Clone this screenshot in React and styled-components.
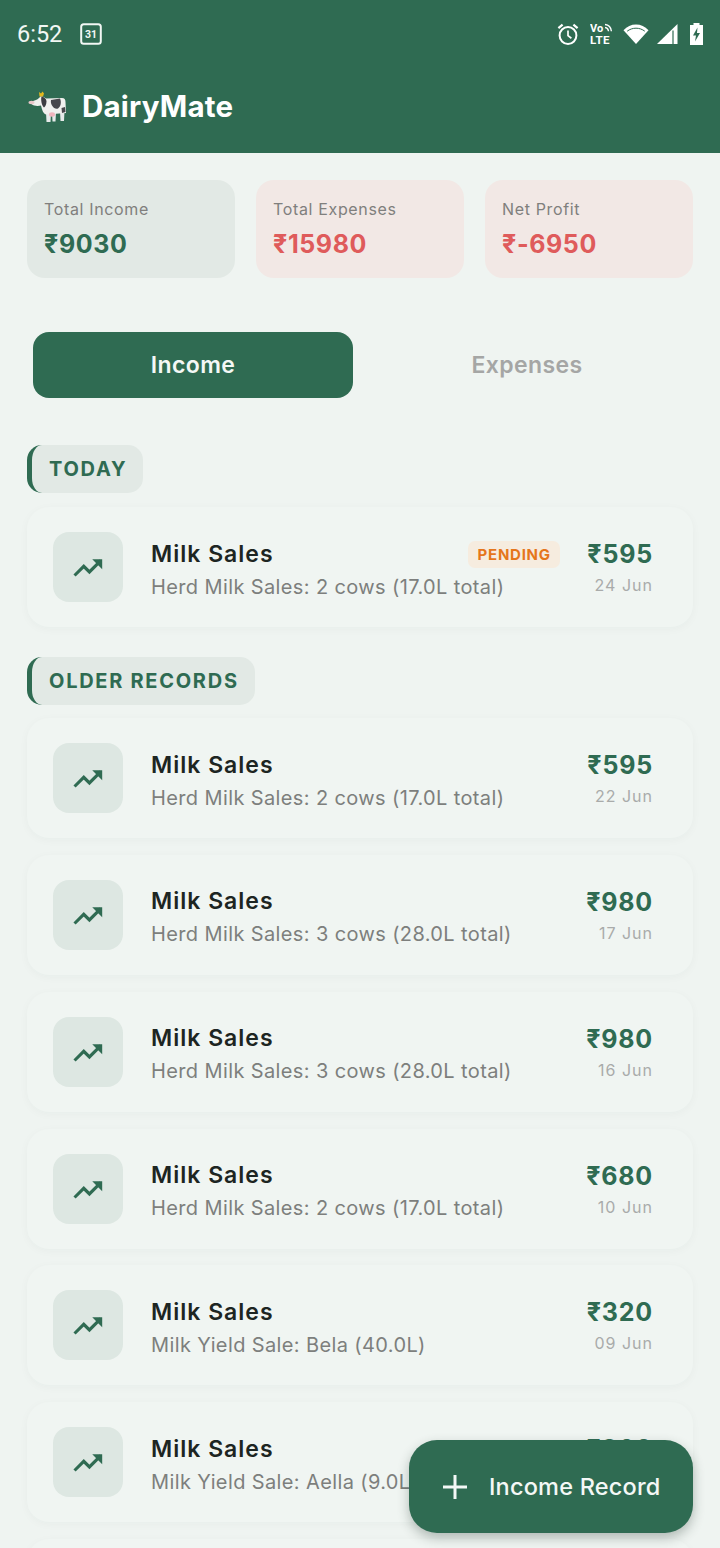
import styled, { createGlobalStyle } from "styled-components";

const GlobalStyle = createGlobalStyle`
    html, body {
        margin: 0;
        padding: 0;
        width: 720px;
        height: 1548px;
        overflow: hidden;
        background: #eff4f1;
        font-family: Inter, "Noto Sans", sans-serif;
    }
    * { box-sizing: border-box; }
`

const green = '#2f6b52'

const Screen = styled.div`
    position: relative;
    width: 720px;
    height: 1548px;
    overflow: hidden;
    background: #eff4f1;
`

const Header = styled.header`
    background: ${green};
    height: 153px;
    color: #fff;
`

const StatusBar = styled.div`
    height: 67px;
    padding: 0 17px 0 17px;
    display: flex;
    align-items: center;
    justify-content: space-between;
`

const StatusLeft = styled.div`
    display: flex;
    align-items: center;
    gap: 18px;
`

const Clock = styled.span`
    font-family: Roboto, sans-serif;
    font-size: 23.5px;
    color: #f2f7f4;
`

const StatusIcons = styled.div`
    display: flex;
    align-items: center;
    gap: 10px;
`

const SignalSvg = styled.svg`
    margin: 0 2px 0 -2px;
`

const AppBar = styled.div`
    height: 78px;
    padding: 0 0 0 28px;
    display: flex;
    align-items: center;
    gap: 14px;
`

const AppTitle = styled.h1`
    margin: 0;
    font-size: 29.5px;
    font-weight: 700;
    letter-spacing: 0.2px;
    color: #fff;
`

const Content = styled.main`
    padding: 27px 27px 0;
`

const Summary = styled.section`
    display: grid;
    grid-template-columns: repeat(3, 1fr);
    gap: 21px;
`

const SummaryCard = styled.div`
    height: 98px;
    padding: 19px 17px;
    border-radius: 18px;
    background: ${(p) => (p.$tone === 'red' ? '#f2e8e5' : '#e2e9e5')};
`

const SummaryLabel = styled.div`
    font-size: 16px;
    letter-spacing: 0.65px;
    line-height: 20px;
    color: #807f7d;
`

const SummaryValue = styled.div`
    margin-top: 9px;
    font-size: 25px;
    font-weight: 700;
    line-height: 32px;
    letter-spacing: 0.6px;
    color: ${(p) => (p.$tone === 'red' ? '#df5b5b' : green)};
`

const Tabs = styled.div`
    margin-top: 54px;
    padding: 0 6px;
    display: grid;
    grid-template-columns: 320px 320px;
    gap: 14px;
`

const Tab = styled.div`
    height: 66px;
    display: flex;
    align-items: center;
    justify-content: center;
    border-radius: 16px;
    font-size: 23px;
    font-weight: 600;
    letter-spacing: 0.4px;
    background: ${(p) => (p.$active ? green : 'transparent')};
    color: ${(p) => (p.$active ? '#f4f8f6' : '#a5a6a5')};
`

const SectionLabel = styled.div`
    display: inline-flex;
    align-items: center;
    height: 48px;
    padding: 0 16px 0 17px;
    border-left: 5px solid ${green};
    border-radius: 15px;
    background: #e2e9e5;
    color: ${green};
    font-size: 20px;
    font-weight: 700;
    letter-spacing: 1.72px;
`

const Section = styled.section`
    margin-top: ${(p) => p.$top}px;
    display: flex;
    flex-direction: column;
    align-items: flex-start;
`

const RecordList = styled.div`
    margin-top: ${(p) => p.$top}px;
    width: 100%;
    display: flex;
    flex-direction: column;
    gap: 16.8px;
`

const RecordCard = styled.article`
    flex: none;
    height: 120px;
    padding: 0 40px 0 26px;
    display: flex;
    align-items: center;
    border-radius: 22px;
    background: #f0f5f2;
    box-shadow: 0 2px 10px rgba(40, 70, 55, 0.035);
`

const IconBox = styled.div`
    flex: none;
    width: 70px;
    height: 70px;
    border-radius: 16px;
    background: #dde7e2;
    display: flex;
    align-items: center;
    justify-content: center;
    color: ${green};
`

const RecordBody = styled.div`
    flex: 1;
    min-width: 0;
    margin-left: 28px;
    padding-top: 5px;
`

const RecordTitle = styled.div`
    font-size: 23px;
    font-weight: 600;
    line-height: 30px;
    letter-spacing: 1px;
    color: #1d2522;
`

const RecordDesc = styled.div`
    margin-top: 4px;
    font-size: 20px;
    line-height: 28px;
    letter-spacing: 0.38px;
    color: #7d7f7d;
    white-space: nowrap;
`

const Pending = styled.div`
    align-self: flex-start;
    margin: 34px 27px 0 0;
    height: 27px;
    padding: 0 9.5px;
    display: flex;
    align-items: center;
    border-radius: 7px;
    background: #f6ecdf;
    color: #e5761c;
    font-size: 15px;
    font-weight: 700;
    letter-spacing: 0.75px;
`

const RecordRight = styled.div`
    flex: none;
    text-align: right;
`

const Amount = styled.div`
    font-size: 25px;
    font-weight: 700;
    line-height: 30px;
    letter-spacing: 0.8px;
    color: ${green};
`

const RecordDate = styled.div`
    margin-top: 6px;
    font-size: 16px;
    line-height: 20px;
    letter-spacing: 1px;
    color: #a9abaa;
`

const Fab = styled.button`
    position: absolute;
    left: 409px;
    top: 1440px;
    width: 284px;
    height: 93px;
    padding: 0 0 0 33px;
    display: flex;
    align-items: center;
    gap: 21px;
    border: none;
    border-radius: 28px;
    background: ${green};
    color: #f4f8f6;
    font-family: inherit;
    font-size: 23.5px;
    font-weight: 500;
    letter-spacing: 0.2px;
    box-shadow: 0 5px 12px rgba(30, 50, 40, 0.3);
`

function CalendarIcon() {
    return <svg width="22" height="22" viewBox="0 0 22 22" fill="none">
        <rect x="1.2" y="1.2" width="19.6" height="19.6" rx="2.5" stroke="#f2f7f4" strokeWidth="2" />
        <text x="11" y="15" textAnchor="middle" fontFamily="Roboto, sans-serif" fontSize="10.5" fontWeight="700" fill="#f2f7f4">31</text>
    </svg>
}

function AlarmIcon() {
    return <svg width="24" height="24" viewBox="0 0 24 24" fill="none" stroke="#fff" strokeWidth="2">
        <circle cx="12" cy="13.5" r="8.4" />
        <path d="M12 8.500v5.200l3.400 2.600" strokeWidth="1.7" />
        <path d="M2.400 6.200 6.600 2.600M21.600 6.200 17.400 2.600" strokeWidth="2.200" />
    </svg>
}

function VoLteIcon() {
    return <svg width="23" height="24" viewBox="0 0 23 24" fill="none">
        <text x="0" y="10" fontFamily="Roboto, sans-serif" fontSize="11" fontWeight="700" fill="#fff">Vo</text>
        <text x="0" y="22" fontFamily="Roboto, sans-serif" fontSize="11.5" fontWeight="700" fill="#fff" letterSpacing="0.5">LTE</text>
        <path d="M15 2.500c3.500.3 6 2.800 6.400 6.800M15 5.500c2 .2 3.300 1.600 3.500 3.800" stroke="#fff" strokeWidth="1.4" />
    </svg>
}

function WifiIcon() {
    return <svg width="26" height="20" viewBox="0 0 26 20">
        <path d="M13 20 .5 6.200C4 2.600 8.200.6 13 .6s9 2 12.500 5.600z" fill="#fff" />
        <path d="M4.200 7.200C6.800 5.200 9.800 4.200 13 4.200s6.200 1 8.800 3" fill="none" stroke={green} strokeWidth="1" />
    </svg>
}

function SignalIcon() {
    return <SignalSvg width="21" height="20" viewBox="0 0 21 20">
        <path d="M0 20 20.500 0v20z" fill="#fff" />
        <path d="M16 6.500V20" stroke={green} strokeWidth="1.200" />
    </SignalSvg>
}

function BatteryIcon() {
    return <svg width="13" height="22" viewBox="0 0 13 22">
        <path d="M3.500 0h6v2h3.500v20H0V2h3.500z" fill="#fff" />
        <path d="M7.500 4.500 3 12.500h3L5 18.500l5-8.500H7z" fill={green} />
    </svg>
}

function CowIcon() {
    return <svg width="40" height="36" viewBox="0 0 40 36">
        {/* legs */}
        <path d="M18 24h5l-.5 10h-4zM24 24h4l-.5 9.500h-3zM32 23h4.500l-.5 10h-3.500z" fill="#e6eaea" />
        {/* body and head */}
        <path d="M13 8c2 .5 3.500 1.500 5 2.500L34 10c2.500 0 3.500 1.500 3.500 4l.5 11-20 1.500c-3-1-4-5-5-9-2 .5-7 1-9.500-1.500-.5-1.500 1-3 3-3.500 2-.5 4-1.500 6-4z" fill="#f0f0ee" />
        {/* crown tuft */}
        <path d="M11 4l2 1.500L14.500 3.500l1.500 2-1 3h-3.500z" fill="#e2b91f" />
        {/* patches */}
        <path d="M13.500 8.500c2.500.5 4.500 2 5 4.500 0 3-1 5.500-2.500 6.500-2-1.500-3.500-7-2.500-11z" fill="#3d3d42" />
        <path d="M23 12l9-1.500c1.500 3 1 8-2 10-4 1.500-8-4-7-8.500z" fill="#47474c" />
        <path d="M33.500 20l3.500-1 .5 5-3.500 1z" fill="#47474c" />
        <ellipse cx="24" cy="26.500" rx="3" ry="2.200" fill="#f0b4bd" />
        <ellipse cx="3.500" cy="14.500" rx="3" ry="1.700" fill="#e9c7ca" />
    </svg>
}

function TrendIcon() {
    return <svg width="34" height="34" viewBox="0 0 24 24" fill="none" stroke="currentColor" strokeWidth="2.200">
        <path d="M2.500 18 9 11.500l4 4L21 7.500" />
        <path d="M22 6.500v7l-7-7z" fill="currentColor" stroke="none" />
    </svg>
}

function PlusIcon() {
    return <svg width="26" height="26" viewBox="0 0 26 26" stroke="#f4f8f6" strokeWidth="3">
        <path d="M13 1v24M1 13h24" />
    </svg>
}

const olderRecords = [
    { amount: '₹595', desc: 'Herd Milk Sales: 2 cows (17.0L total)', date: '22 Jun' },
    { amount: '₹980', desc: 'Herd Milk Sales: 3 cows (28.0L total)', date: '17 Jun' },
    { amount: '₹980', desc: 'Herd Milk Sales: 3 cows (28.0L total)', date: '16 Jun' },
    { amount: '₹680', desc: 'Herd Milk Sales: 2 cows (17.0L total)', date: '10 Jun' },
    { amount: '₹320', desc: 'Milk Yield Sale: Bela (40.0L)', date: '09 Jun' },
    { amount: '₹360', desc: 'Milk Yield Sale: Aella (9.0L)', date: '08 Jun' },
]

function Record({ amount, desc, date, pending }) {
    return <RecordCard>
        <IconBox><TrendIcon /></IconBox>
        <RecordBody>
            <RecordTitle>Milk Sales</RecordTitle>
            <RecordDesc>{desc}</RecordDesc>
        </RecordBody>
        {pending && <Pending>PENDING</Pending>}
        <RecordRight>
            <Amount>{amount}</Amount>
            <RecordDate>{date}</RecordDate>
        </RecordRight>
    </RecordCard>
}

export default function App() {
    return <Screen>
        <GlobalStyle />
        <Header>
            <StatusBar>
                <StatusLeft>
                    <Clock>6:52</Clock>
                    <CalendarIcon />
                </StatusLeft>
                <StatusIcons>
                    <AlarmIcon />
                    <VoLteIcon />
                    <WifiIcon />
                    <SignalIcon />
                    <BatteryIcon />
                </StatusIcons>
            </StatusBar>
            <AppBar>
                <CowIcon />
                <AppTitle>DairyMate</AppTitle>
            </AppBar>
        </Header>
        <Content>
            <Summary>
                <SummaryCard>
                    <SummaryLabel>Total Income</SummaryLabel>
                    <SummaryValue>₹9030</SummaryValue>
                </SummaryCard>
                <SummaryCard $tone="red">
                    <SummaryLabel>Total Expenses</SummaryLabel>
                    <SummaryValue $tone="red">₹15980</SummaryValue>
                </SummaryCard>
                <SummaryCard $tone="red">
                    <SummaryLabel>Net Profit</SummaryLabel>
                    <SummaryValue $tone="red">₹-6950</SummaryValue>
                </SummaryCard>
            </Summary>
            <Tabs>
                <Tab $active>Income</Tab>
                <Tab>Expenses</Tab>
            </Tabs>
            <Section $top={47}>
                <SectionLabel>TODAY</SectionLabel>
                <RecordList $top={14}>
                    <Record amount="₹595" desc="Herd Milk Sales: 2 cows (17.0L total)" date="24 Jun" pending />
                </RecordList>
            </Section>
            <Section $top={30}>
                <SectionLabel>OLDER RECORDS</SectionLabel>
                <RecordList $top={13.2}>
                    {olderRecords.map((record, index) => <Record key={index} {...record} />)}
                    {/* next card only peeks in at the bottom edge */}
                    <RecordCard />
                </RecordList>
            </Section>
        </Content>
        <Fab><PlusIcon />Income Record</Fab>
    </Screen>
}
